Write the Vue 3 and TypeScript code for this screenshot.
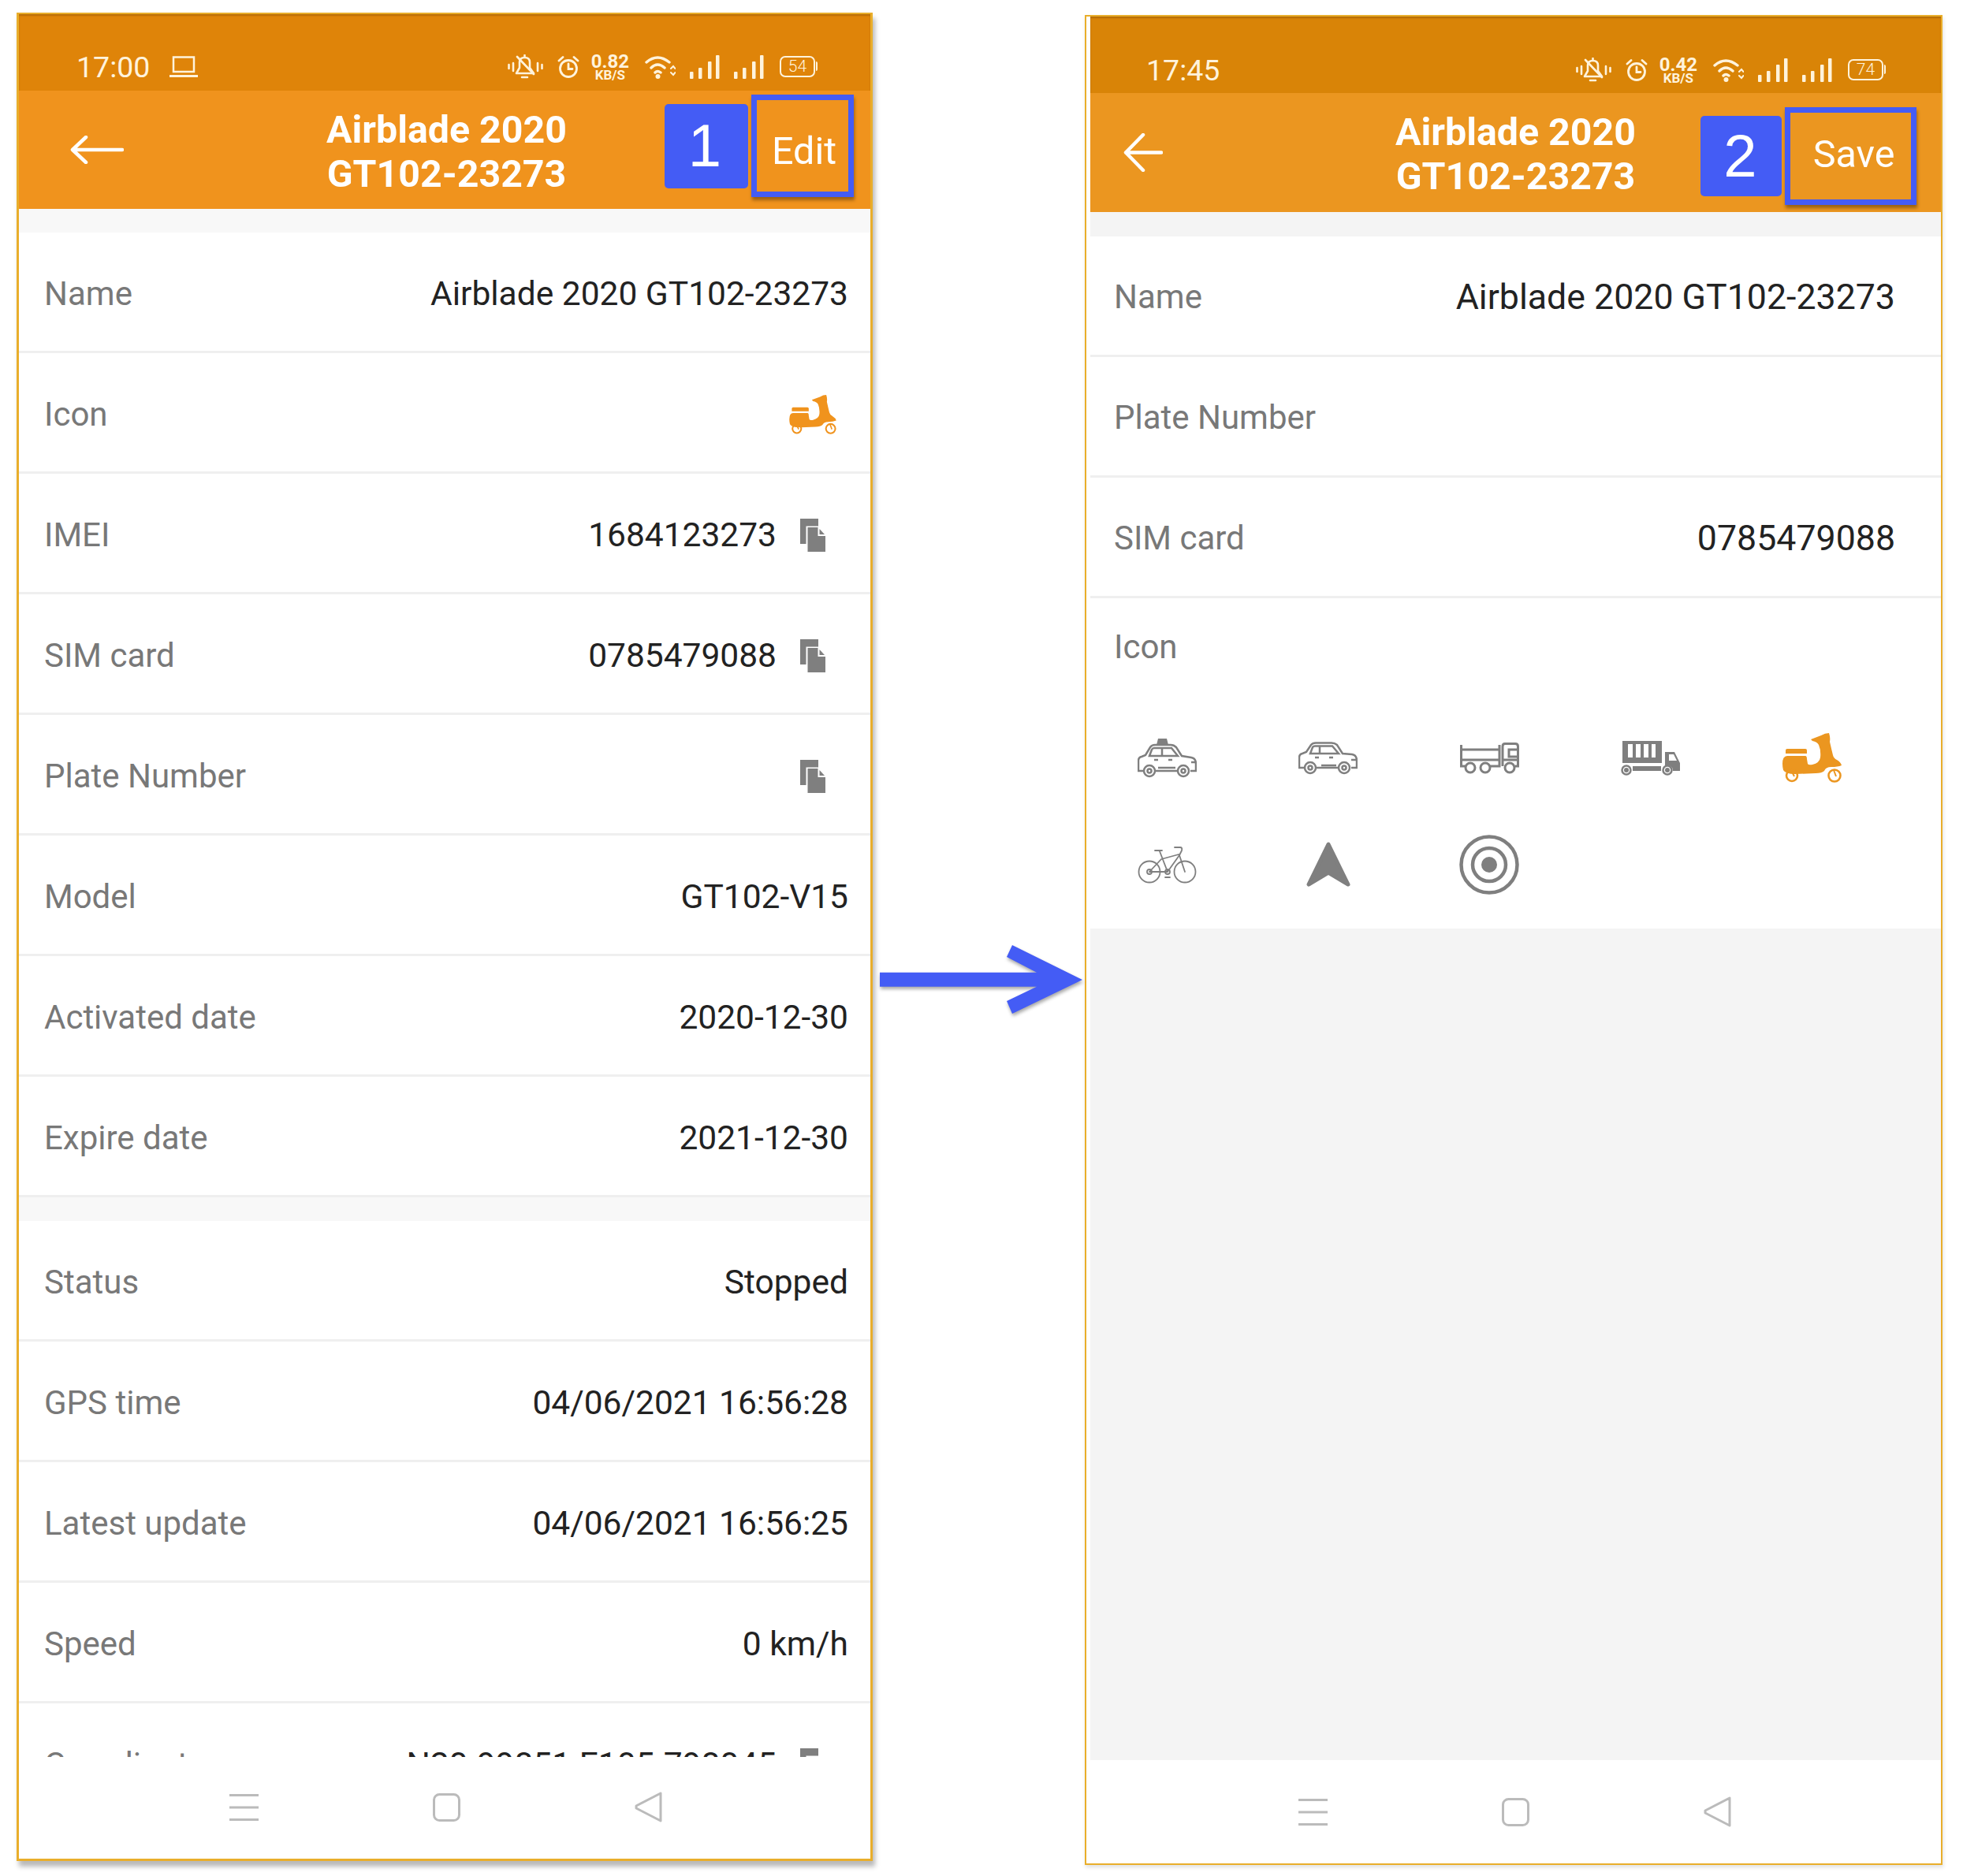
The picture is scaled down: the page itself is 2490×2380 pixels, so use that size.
<script setup lang="ts">
interface Row {
  label: string;
  value?: string;
  copy?: boolean;
  scooter?: boolean;
}

interface Phone {
  id: string;
  time: string;
  laptop: boolean;
  speed: string;
  battery: string;
  badge: string;
  action: string;
  backBox: string;
  backPath: string;
  sections: Row[][];
  picker: boolean;
}

const phones: Phone[] = [
  {
    id: 'detail',
    time: '17:00',
    laptop: true,
    speed: '0.82',
    battery: '54',
    badge: '1',
    action: 'Edit',
    backBox: '0 0 68 36',
    backPath: 'M66 18H3M20 2L3 18L20 34',
    picker: false,
    sections: [
      [
        { label: 'Name', value: 'Airblade 2020 GT102-23273' },
        { label: 'Icon', scooter: true },
        { label: 'IMEI', value: '1684123273', copy: true },
        { label: 'SIM card', value: '0785479088', copy: true },
        { label: 'Plate Number', copy: true },
        { label: 'Model', value: 'GT102-V15' },
        { label: 'Activated date', value: '2020-12-30' },
        { label: 'Expire date', value: '2021-12-30' },
      ],
      [
        { label: 'Status', value: 'Stopped' },
        { label: 'GPS time', value: '04/06/2021 16:56:28' },
        { label: 'Latest update', value: '04/06/2021 16:56:25' },
        { label: 'Speed', value: '0 km/h' },
        { label: 'Coordinates', value: 'N20.99851 E105.798045', copy: true },
      ],
    ],
  },
  {
    id: 'edit',
    time: '17:45',
    laptop: false,
    speed: '0.42',
    battery: '74',
    badge: '2',
    action: 'Save',
    backBox: '0 0 50 49',
    backPath: 'M48 24.5H3M25 2L3 24.5L25 47',
    picker: true,
    sections: [
      [
        { label: 'Name', value: 'Airblade 2020 GT102-23273' },
        { label: 'Plate Number' },
        { label: 'SIM card', value: '0785479088' },
      ],
    ],
  },
];

const vehicleIcons = ['taxi', 'car', 'tipper', 'lorry', 'scooter', 'bike', 'pointer', 'target'];
</script>

<template>
  <div class="page">
    <!-- shared icons -->
    <svg class="sprite" aria-hidden="true">
      <symbol id="i-copy" viewBox="0 0 32 42">
        <path d="M0 0H23V9.5H7.5V32H0Z" />
        <path d="M9.5 11H22.5V22H32V42H9.5Z" />
        <path d="M24.5 13L31 20H24.5Z" />
      </symbol>
      <symbol id="i-scooter" viewBox="0 0 75 63">
        <path d="M6 20H29Q31 20 31 22V26H4V22Q4 20 6 20Z" />
        <path d="M0 39Q0 29 6 29H29Q31 29 31 33L32 39Q33 41 38 40Q47 38 48 31Q49 22 46 15Q44 11 38 10L36 8L49 3Q54 0 59 0Q61 6 60 11Q62 20 64 28Q65 32 69 34Q74 37 75 41Q70 43 62 43Q55 43 53 48Q50 51 42 51L16 52Q4 52 1 47Q0 43 0 39Z" />
        <circle cx="12" cy="54" r="7" fill="none" stroke="currentColor" stroke-width="2.600" />
        <circle cx="66" cy="54" r="7.500" fill="none" stroke="currentColor" stroke-width="2.600" />
        <path d="M12 49L15 55M65 47L68 55" stroke="currentColor" stroke-width="2" />
      </symbol>
      <symbol id="i-taxi" viewBox="0 0 75 50">
        <path d="M26 0H37L39 8H24Z" />
        <g fill="none" stroke="currentColor" stroke-width="2.5">
          <path d="M7 41H1V28Q1 24 5 23L10 21L16 11Q18 8 22 8H42Q46 8 49 11L56 22L68 24Q74 25 74 32V41H67" />
          <path d="M15 22L18 14Q19 12 21 12H43L51 22Z" />
          <path d="M31 12V22M23 41H50M26 37H48M68 30H74" />
          <circle cx="15" cy="41" r="7" />
          <circle cx="58" cy="41" r="7" />
          <circle cx="15" cy="41" r="2.5" />
          <circle cx="58" cy="41" r="2.5" />
          <path d="M21 27H26M39 27H44" />
        </g>
      </symbol>
      <symbol id="i-car" viewBox="0 0 75 42">
        <g fill="none" stroke="currentColor" stroke-width="2.5">
          <path d="M7 33H1V20Q1 16 5 15L10 13L16 4Q18 1.500 22 1.500H42Q46 1.500 49 4L56 15L68 16Q74 17 74 24V33H67" />
          <path d="M15 15L18 7Q19 5.500 21 5.500H43L51 15Z" />
          <path d="M27 5.500V15M23 33H50M29 30H48M67 23H74" />
          <circle cx="15" cy="33" r="7" />
          <circle cx="58" cy="33" r="7" />
          <circle cx="15" cy="33" r="2.500" />
          <circle cx="58" cy="33" r="2.500" />
          <path d="M21 20H26M39 20H44" />
        </g>
      </symbol>
      <symbol id="i-tipper" viewBox="0 0 75 40">
        <g fill="none" stroke="currentColor" stroke-width="3">
          <path d="M1.500 3V30H7M1.500 9H50M1.500 22H50M50 3V30H38" />
          <path d="M54 30V5Q54 1.500 57 1.500H70Q73.500 1.500 73.500 5V30H70" />
          <path d="M73 9H62V18H73M54 22H73" />
          <circle cx="13" cy="32" r="6" />
          <circle cx="32" cy="32" r="6" />
          <circle cx="63" cy="32" r="6" />
        </g>
      </symbol>
      <symbol id="i-lorry" viewBox="0 0 75 44">
        <path fill-rule="evenodd" d="M2 0H52V28H2ZM9 4V21H15V4ZM19 4V21H25V4ZM29 4V21H35V4ZM39 4V21H44V4Z" />
        <path fill-rule="evenodd" d="M56 14H68L75 28V38H66C66 30 56 30 56 34ZM61 17V25H71L67 17Z" />
        <path d="M15 32H51V38H15Z" />
        <g fill="none" stroke="currentColor" stroke-width="2.500">
          <circle cx="7" cy="37" r="5.500" />
          <circle cx="59" cy="37" r="5.500" />
        </g>
        <circle cx="7" cy="37" r="3" />
        <circle cx="59" cy="37" r="3" />
      </symbol>
      <symbol id="i-bike" viewBox="0 0 75 48">
        <g fill="none" stroke="currentColor" stroke-width="1.800" stroke-linecap="round" stroke-linejoin="round">
          <circle cx="15" cy="33" r="13.500" />
          <circle cx="60" cy="33" r="13.500" />
          <circle cx="15" cy="33" r="3" />
          <circle cx="38" cy="33" r="3" />
          <path d="M15 33H38L28 7M15 33L30 17L52 11M38 33L53 12M47 2H54Q57 2 56 6L53 12L60 33M22 6H31M35 40H41" />
        </g>
      </symbol>
      <symbol id="i-pointer" viewBox="0 0 56 58">
        <path d="M28 3L53 54L28 39L3 54Z" stroke="currentColor" stroke-width="5" stroke-linejoin="round" />
      </symbol>
      <symbol id="i-target" viewBox="0 0 76 76">
        <g fill="none" stroke="currentColor" stroke-width="4.500">
          <circle cx="38" cy="38" r="35.500" />
          <circle cx="38" cy="38" r="21" />
        </g>
        <circle cx="38" cy="38" r="10" />
      </symbol>
      <symbol id="i-bell" viewBox="0 0 45 31">
        <g fill="none" stroke="currentColor" stroke-width="2.600" stroke-linecap="round" stroke-linejoin="round">
          <path d="M11 24H33L28 17V10Q28 4 21.500 4Q15 4 15 10V17Z" />
          <path d="M12 3L33 25M21.500 1V3M18 29H25" />
          <path d="M1.500 13V18M7 11V21M38 11V21M43.500 13V18" />
        </g>
      </symbol>
      <symbol id="i-alarm" viewBox="0 0 28 28">
        <g fill="none" stroke="currentColor" stroke-width="2.800" stroke-linecap="round">
          <circle cx="14" cy="16" r="10.500" />
          <path d="M14 10V16.500H19M2 6L7 1.500M26 6L21 1.500" />
        </g>
      </symbol>
      <symbol id="i-wifi" viewBox="0 0 39 30">
        <g fill="none" stroke="currentColor" stroke-width="3.400" stroke-linecap="round">
          <path d="M2 9Q16 -3 31 9M8 16Q16 8 25 16M13 22Q16 19 20 22" />
          <path d="M33 17L36 14L38.500 17M33 22L36 25L38.500 22" stroke-width="2" />
        </g>
        <circle cx="16.500" cy="27" r="3" />
      </symbol>
      <symbol id="i-signal" viewBox="0 0 38 30">
        <rect x="0" y="21" width="4.500" height="9" rx="1" />
        <rect x="11" y="16" width="4.500" height="14" rx="1" />
        <rect x="23" y="8" width="4.500" height="22" rx="1" />
        <rect x="33" y="0" width="4.500" height="30" rx="1" />
      </symbol>
    </svg>

    <template v-for="(phone, p) in phones" :key="phone.id">
      <section class="phone" :class="`phone-${phone.id}`">
        <div class="status-bar">
          <span class="clock">{{ phone.time }}</span>
          <svg v-if="phone.laptop" class="laptop" viewBox="0 0 36 27" fill="none" stroke="currentColor" stroke-width="2.500">
            <path d="M5 1.500H31V20H5Z" />
            <path d="M0 25.500H36" stroke-width="3" />
          </svg>
          <div class="status-icons">
            <svg class="st-bell"><use href="#i-bell" /></svg>
            <svg class="st-alarm"><use href="#i-alarm" /></svg>
            <div class="net-speed">
              <span class="net-num">{{ phone.speed }}</span>
              <span class="net-unit">KB/S</span>
            </div>
            <svg class="st-wifi"><use href="#i-wifi" /></svg>
            <svg class="st-signal"><use href="#i-signal" /></svg>
            <svg class="st-signal"><use href="#i-signal" /></svg>
            <div class="battery">{{ phone.battery }}</div>
          </div>
        </div>

        <header class="app-bar">
          <svg class="back" :viewBox="phone.backBox" fill="none" stroke="currentColor" stroke-width="4.500" stroke-linecap="round" stroke-linejoin="round">
            <path :d="phone.backPath" />
          </svg>
          <h1 class="title">Airblade 2020<br />GT102-23273</h1>
          <div class="actions">
            <span class="badge">{{ phone.badge }}</span>
            <button class="action">{{ phone.action }}</button>
          </div>
        </header>

        <div class="body">
          <div v-for="(section, s) in phone.sections" :key="s" class="section">
            <div v-for="row in section" :key="row.label" class="row">
              <span class="label">{{ row.label }}</span>
              <span v-if="row.value" class="value">{{ row.value }}</span>
              <svg v-if="row.scooter" class="row-scooter"><use href="#i-scooter" /></svg>
              <svg v-if="row.copy" class="copy"><use href="#i-copy" /></svg>
            </div>
          </div>

          <div v-if="phone.picker" class="picker">
            <span class="label">Icon</span>
            <div class="picker-grid">
              <div v-for="icon in vehicleIcons" :key="icon" class="picker-cell" :class="{ selected: icon === 'scooter' }">
                <svg :class="`pick-${icon}`"><use :href="`#i-${icon}`" /></svg>
              </div>
            </div>
          </div>
        </div>

        <nav class="nav-bar">
          <svg class="nav-menu" viewBox="0 0 37 34" fill="currentColor">
            <rect y="0" width="37" height="3" />
            <rect y="15.500" width="37" height="3" />
            <rect y="31" width="37" height="3" />
          </svg>
          <svg class="nav-home" viewBox="0 0 35 36" fill="none" stroke="currentColor" stroke-width="3">
            <rect x="1.500" y="1.500" width="32" height="33" rx="7" />
          </svg>
          <svg class="nav-back" viewBox="0 0 35 39" fill="none" stroke="currentColor" stroke-width="3" stroke-linejoin="round">
            <path d="M33 2V37L2 21V18Z" />
          </svg>
        </nav>
      </section>

      <svg v-if="p === 0" class="flow-arrow" viewBox="0 0 257 88">
        <path d="M0 34.700H199L161 15L168 0L257 44L168 87L161 71L199 52.700H0Z" />
      </svg>
    </template>
  </div>
</template>

<style scoped>
.page {
  display: flex;
  align-items: flex-start;
  width: 2490px;
  height: 2380px;
  padding-left: 21px;
  box-sizing: border-box;
  background: #fff;
  font-family: Roboto, sans-serif;
  overflow: hidden;
}

.sprite {
  position: absolute;
  width: 0;
  height: 0;
}

.phone {
  display: flex;
  flex-direction: column;
  flex: none;
  box-sizing: border-box;
  height: 2345px;
  border: 2px solid #e9ae2b;
  background: #fff;
}

.phone-detail {
  width: 1086px;
  margin-top: 16px;
  border-width: 2px 3px 3px 3px;
  box-shadow: 3px 7px 6px rgba(0, 0, 0, 0.28);
}

.phone-edit {
  width: 1088px;
  height: 2347px;
  margin-top: 19px;
  padding-left: 5px;
  box-shadow: 1px 3px 5px rgba(0, 0, 0, 0.12);
}

/* status bar */
.status-bar {
  display: flex;
  align-items: center;
  flex: none;
  height: 97px;
  padding: 36px 70px 0 73px;
  box-sizing: border-box;
  background: #df8409;
  box-shadow: inset 0 2px 2px rgba(0, 0, 0, 0.18);
  color: #fff3dc;
}

.phone-edit .status-bar {
  background: #d98407;
  padding-left: 71px;
  padding-right: 73px;
  padding-top: 38px;
}

.clock {
  font-size: 37.500px;
  font-weight: 400;
}

.laptop {
  width: 36px;
  height: 27px;
  margin-left: 25px;
}

.status-icons {
  display: flex;
  align-items: center;
  margin-left: auto;
  gap: 18px;
  fill: currentColor;
}

.st-bell {
  width: 45px;
  height: 31px;
}

.st-alarm {
  width: 28px;
  height: 28px;
}

.net-speed {
  display: flex;
  flex-direction: column;
  align-items: center;
  margin: 0 2px 0 -3px;
  font-weight: 700;
}

.net-num {
  height: 20px;
  font-size: 24px;
  line-height: 20px;
}

.net-unit {
  height: 14px;
  font-size: 17px;
  line-height: 14px;
}

.st-wifi {
  width: 39px;
  height: 30px;
}

.st-signal {
  width: 38px;
  height: 30px;
}

.battery {
  position: relative;
  width: 45px;
  height: 27px;
  margin-left: 2px;
  box-sizing: border-box;
  border: 2.500px solid currentColor;
  border-radius: 7px;
  text-align: center;
  font-size: 21px;
  font-weight: 300;
  line-height: 22px;
}

/* battery cap */
.battery::after {
  content: '';
  position: absolute;
  top: 5px;
  right: -5px;
  width: 2.500px;
  height: 12px;
  border-radius: 0 2px 2px 0;
  background: currentColor;
}

/* app bar */
.app-bar {
  display: grid;
  grid-template-columns: 1fr auto 1fr;
  align-items: center;
  flex: none;
  height: 150px;
  background: #f0931d;
  color: #fff;
}

.phone-edit .app-bar {
  height: 151px;
  background: #eb9620;
}

.back {
  width: 68px;
  height: 36px;
  margin-left: 65px;
}

.phone-edit .back {
  width: 50px;
  height: 49px;
  margin-left: 42px;
}

.title {
  margin: 0 0 0 5px;
  padding-top: 5px;
  font-size: 48.300px;
  font-weight: 700;
  line-height: 56px;
  text-align: center;
}

.phone-edit .title {
  margin-left: 0;
}

.actions {
  display: flex;
  align-items: center;
  justify-self: end;
  gap: 4px;
  margin: -10px 21px 0 0;
}

.phone-edit .actions {
  margin: 9px 31px 0 0;
}

.badge {
  display: flex;
  align-items: center;
  justify-content: center;
  width: 106px;
  height: 107px;
  padding-right: 4px;
  box-sizing: border-box;
  border-radius: 5px;
  background: #445cf5;
  font-family: 'Liberation Sans', sans-serif;
  font-size: 76px;
  line-height: 1;
}

.phone-edit .badge {
  width: 103px;
  height: 102px;
  padding-right: 2px;
}

.action {
  width: 130px;
  height: 130px;
  padding: 12px 0 0 4px;
  box-sizing: border-box;
  border: 7px solid #445cf5;
  background: transparent;
  box-shadow: 1px 4px 4px rgba(0, 0, 0, 0.35);
  color: #fff;
  font-family: Roboto, sans-serif;
  font-size: 48.500px;
}

.phone-edit .action {
  width: 167px;
  height: 124px;
  padding: 0 0 6px 8px;
}

/* rows */
.body {
  flex: 1;
  min-height: 0;
  padding-top: 30px;
  background: #f8f8f8;
  overflow: hidden;
}

.phone-edit .body {
  padding-top: 30.500px;
  background: #f4f4f4;
}

.section {
  background: #fff;
  margin-bottom: 30px;
}

.phone-edit .section {
  margin-bottom: 0;
}

.row {
  display: flex;
  align-items: center;
  box-sizing: border-box;
  height: 153px;
  padding: 5px 28px 0 32px;
  border-bottom: 3px solid #efefef;
}

.phone-edit .row {
  padding: 4px 58px 0 30px;
}

.label {
  font-size: 42px;
  color: #787878;
}

.value {
  margin-left: auto;
  font-size: 42.500px;
  color: #222;
}

.phone-edit .value {
  font-size: 44.700px;
}

.copy {
  flex: none;
  width: 32px;
  height: 42px;
  margin: 0 29px 0 30px;
  fill: #7f7f7f;
}

.label + .copy {
  margin-left: auto;
}

.row-scooter {
  width: 60px;
  height: 50px;
  margin: 0 15px 0 auto;
  color: #f0931d;
  fill: currentColor;
}

/* icon picker */
.picker {
  box-sizing: border-box;
  height: 419px;
  padding: 37px 0 0 30px;
  background: #fff;
}

.picker-grid {
  display: grid;
  grid-template-columns: repeat(5, 76px);
  grid-auto-rows: 76px;
  gap: 59px 128.500px;
  margin: 79px 0 0 29px;
}

.picker-cell {
  display: flex;
  align-items: center;
  justify-content: center;
  color: #7f7f7f;
  fill: currentColor;
}

.picker-cell.selected {
  color: #eb9620;
}

.pick-taxi {
  width: 75px;
  height: 50px;
}

.pick-car {
  width: 75px;
  height: 42px;
}

.pick-tipper {
  width: 75px;
  height: 40px;
}

.pick-lorry {
  width: 75px;
  height: 44px;
}

.pick-scooter {
  width: 75px;
  height: 63px;
}

.pick-bike {
  width: 75px;
  height: 48px;
}

.pick-pointer {
  width: 56px;
  height: 58px;
}

.pick-target {
  width: 76px;
  height: 76px;
}

/* navigation */
.nav-bar {
  display: flex;
  align-items: center;
  justify-content: center;
  flex: none;
  gap: 221px;
  height: 129px;
  padding: 0 0 2px 2px;
  box-sizing: border-box;
  background: #fff;
  color: #bbb;
}

.phone-edit .nav-bar {
  height: 131px;
  padding: 0 2px 0 0;
}

.nav-menu {
  width: 37px;
  height: 34px;
}

.nav-home {
  width: 35px;
  height: 36px;
}

.nav-back {
  width: 35px;
  height: 39px;
}

.flow-arrow {
  flex: none;
  width: 257px;
  height: 88px;
  margin: 1199px 3px 0 9px;
  fill: #445cf5;
  filter: drop-shadow(1px 3px 2px rgba(0, 0, 0, 0.35));
}
</style>
